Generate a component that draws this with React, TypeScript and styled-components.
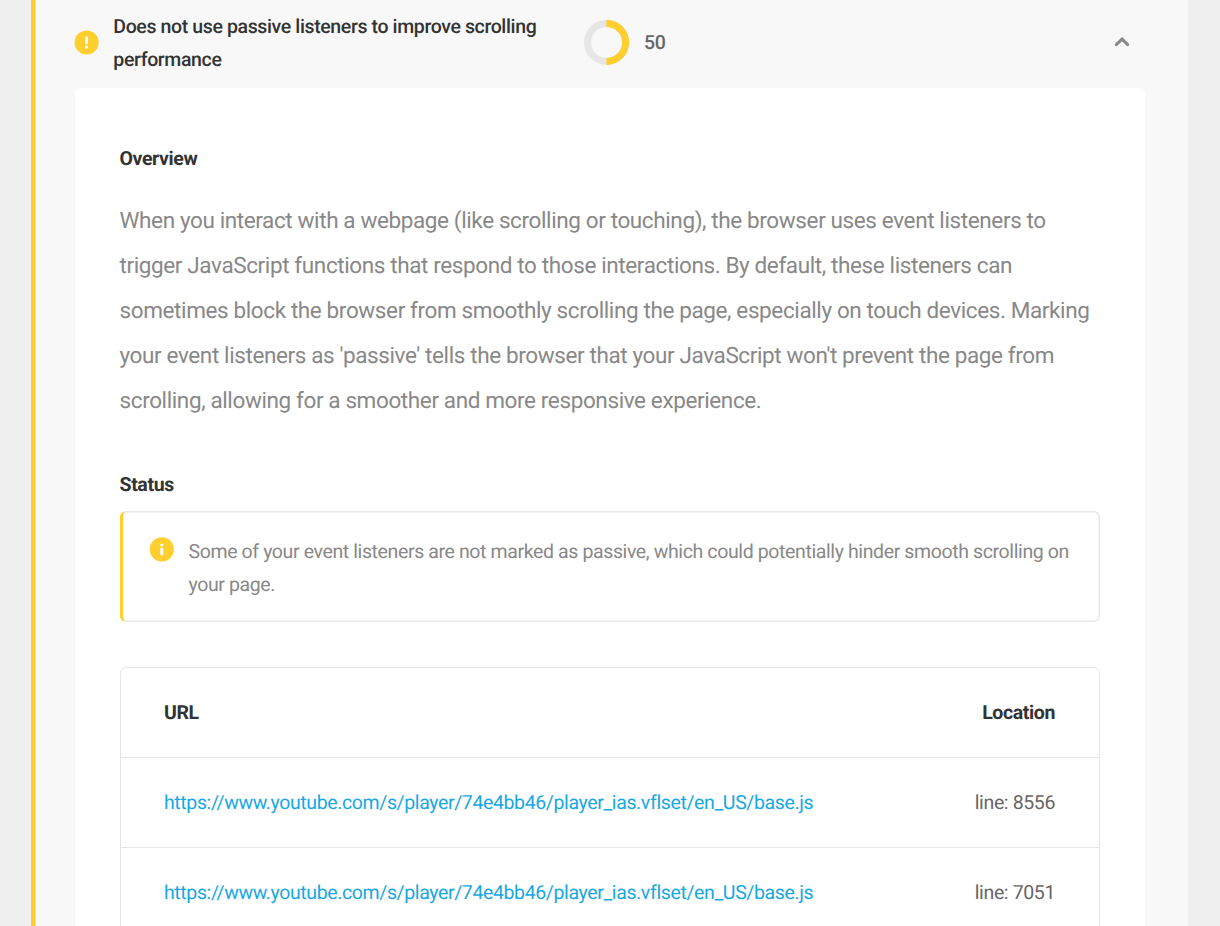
import React from "react";
import styled, { createGlobalStyle } from "styled-components";

const colors = {
  yellow: "#fecf2f",
  heading: "#333333",
  body: "#666666",
  muted: "#888888",
  line: "#e6e6e6",
  link: "#17a8e3",
};

const GlobalStyle = createGlobalStyle`
  *, *::before, *::after { box-sizing: border-box; }
  body {
    margin: 0;
    background: #efefef;
    font-family: Roboto, "Liberation Sans", sans-serif;
    font-size: 19.5px;
    line-height: 33px;
    letter-spacing: -0.375px;
    text-rendering: geometricPrecision;
    color: ${colors.muted};
  }
`;

const Page = styled.main`
  height: 926px;
  overflow: hidden;
  padding: 0 32px 0 31px;
`;

const Audit = styled.section`
  height: 100%;
  padding: 0 43px 0 39.5px;
  border-left: 4px solid ${colors.yellow};
  box-shadow: inset 1px 0 0 #fbe494;
  background: #f8f8f8;
`;

const AuditHeader = styled.header`
  display: flex;
  align-items: center;
  height: 88px;
  padding: 0 14px 2px 0;
`;

const AuditTitle = styled.h2`
  width: 470.9px;
  margin: 0 0 0 13.8px;
  font-size: inherit;
  font-weight: 500;
  color: ${colors.heading};
`;

const Score = styled.span`
  flex: 1;
  margin: -1px 0 0 13.8px;
  font-weight: 500;
  color: ${colors.body};
`;

const Card = styled.div`
  padding: 54px 45px 45px;
  border-radius: 6px;
  background: #fff;
`;

const SectionTitle = styled.h3`
  margin: 0;
  font-size: inherit;
  font-weight: 700;
  color: ${colors.heading};
`;

const Overview = styled.p`
  margin: 24px 0 44px;
  font-size: 22.5px;
  line-height: 45px;
  letter-spacing: -0.382px;
`;

const Notice = styled.div`
  display: flex;
  align-items: flex-start;
  margin: 10px 0 45px;
  height: 111px;
  padding: 23px 27px;
  border: 1px solid ${colors.line};
  border-left: 3px solid ${colors.yellow};
  border-radius: 6px;
  box-shadow: inset -1px 1px 0 #f3f3f3, inset 0 -1px 0 #f3f3f3;
`;

const NoticeText = styled.p`
  margin: 0 0 0 14px;
  letter-spacing: -0.382px;
`;

const Badge = styled.svg<{ $offset?: number }>`
  flex: none;
  width: 25px;
  height: 25px;
  margin-top: ${(p) => p.$offset ?? 0}px;
`;

const Ring = styled.svg`
  flex: none;
  width: 46px;
  height: 46px;
`;

const Table = styled.div`
  border: 1px solid ${colors.line};
  border-radius: 6px;
`;

const Row = styled.div`
  display: flex;
  align-items: center;
  justify-content: space-between;
  height: 90px;
  padding: 0 44px 0 43.5px;
  color: ${colors.body};

  & + & {
    border-top: 1px solid ${colors.line};
  }
`;

const HeaderRow = styled(Row)`
  height: 89px;
  font-weight: 700;
  color: ${colors.heading};
`;

const Link = styled.a`
  color: ${colors.link};
  letter-spacing: -0.382px;
  text-decoration: none;
`;

const rows = [
  { url: "https://www.youtube.com/s/player/74e4bb46/player_ias.vflset/en_US/base.js", line: 8556 },
  { url: "https://www.youtube.com/s/player/74e4bb46/player_ias.vflset/en_US/base.js", line: 7051 },
];

const WarningIcon = () => (
  <Badge viewBox="0 0 25 25" overflow="visible">
    <circle cx="11.6" cy="11.5" r="12.1" fill={colors.yellow} />
    <path d="M11.6 7v5" stroke="#fff" strokeWidth="2.9" strokeLinecap="round" />
    <circle cx="11.6" cy="16.1" r="1.55" fill="#fff" />
  </Badge>
);

const InfoIcon = () => (
  <Badge viewBox="0 0 25 25" $offset={2} overflow="visible">
    <circle cx="11.8" cy="12.4" r="12.1" fill={colors.yellow} />
    <path d="M11.8 12.1v4.8" stroke="#fff" strokeWidth="3" strokeLinecap="round" />
    <circle cx="11.8" cy="8" r="1.55" fill="#fff" />
  </Badge>
);

const ScoreRing = () => (
  <Ring viewBox="0 0 46 46">
    <circle cx="22.6" cy="22.4" r="19" fill="none" stroke={colors.line} strokeWidth="7" />
    <path d="M22.4 3.4h.2a19 19 0 0 1 0 38h-.2" fill="none" stroke={colors.yellow} strokeWidth="7" />
  </Ring>
);

const Chevron = () => (
  <svg width="18" height="12" viewBox="0 0 18 12">
    <path d="M3.3 7.7 9 2.2l5.7 5.5" fill="none" stroke={colors.muted} strokeWidth="3" strokeLinecap="round" />
  </svg>
);

export default function App() {
  return (
    <>
      <GlobalStyle />
      <Page>
        <Audit>
          <AuditHeader>
            <WarningIcon />
            <AuditTitle>Does not use passive listeners to improve scrolling performance</AuditTitle>
            <ScoreRing />
            <Score>50</Score>
            <Chevron />
          </AuditHeader>
          <Card>
            <SectionTitle>Overview</SectionTitle>
            <Overview>
              When you interact with a webpage (like scrolling or touching), the browser uses event listeners to
              trigger JavaScript functions that respond to those interactions. By default, these listeners can
              sometimes block the browser from smoothly scrolling the page, especially on touch devices. Marking
              your event listeners as 'passive' tells the browser that your JavaScript won't prevent the page from
              scrolling, allowing for a smoother and more responsive experience.
            </Overview>
            <SectionTitle>Status</SectionTitle>
            <Notice>
              <InfoIcon />
              <NoticeText>
                Some of your event listeners are not marked as passive, which could potentially hinder smooth
                scrolling on your page.
              </NoticeText>
            </Notice>
            <Table>
              <HeaderRow>
                <span>URL</span>
                <span>Location</span>
              </HeaderRow>
              {rows.map((row) => (
                <Row key={row.line}>
                  <Link href={row.url}>{row.url}</Link>
                  <span>line: {row.line}</span>
                </Row>
              ))}
            </Table>
          </Card>
        </Audit>
      </Page>
    </>
  );
}
